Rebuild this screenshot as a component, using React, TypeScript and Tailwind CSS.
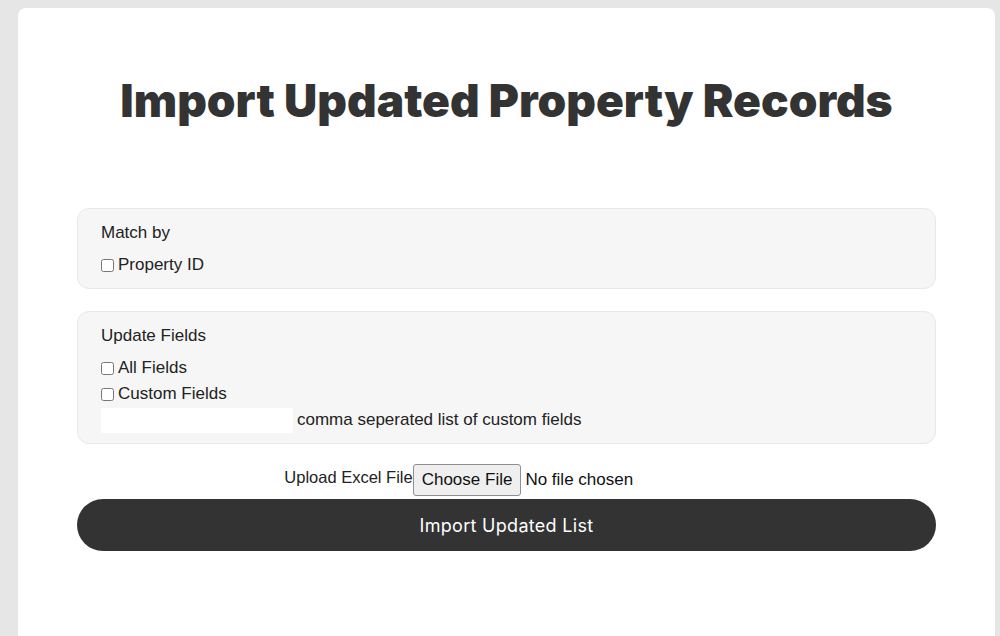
import React from 'react';

const Check: React.FC<{ label: string }> = ({ label }) => (
  <label className="flex h-[26px] items-center">
    <input type="checkbox" className="m-0 mr-[4px] h-[13px] w-[13px]" />
    <span>{label}</span>
  </label>
);

export default function App() {
  return (
    <div className="h-[636px] overflow-hidden bg-[#e6e6e6] pl-[18px] pr-[5px] pt-[8px] font-['Liberation_Sans',Arial,sans-serif] text-[17px] text-[#222]">
      <div className="h-[700px] rounded-lg bg-white px-[59px]">
        <h1 className="pt-[61px] text-center font-['Inter',sans-serif] text-[46px] font-black leading-[62px] text-[#333]">
          Import Updated Property Records
        </h1>

        <div className="mt-[77px] rounded-xl border border-[#e8e8e8] bg-[#f6f6f6] pb-[10px] pl-[23px] pt-[15px]">
          <div className="mb-[10px] leading-[18px]">Match by</div>
          <Check label="Property ID" />
        </div>

        <div className="mt-[22px] rounded-xl border border-[#e8e8e8] bg-[#f6f6f6] pb-[10px] pl-[23px] pt-[15px]">
          <div className="mb-[10px] leading-[18px]">Update Fields</div>
          <Check label="All Fields" />
          <Check label="Custom Fields" />
          <div className="flex h-[26px] items-center">
            <input type="text" className="h-[25px] w-[192px] bg-white px-1 outline-none" />
            <span className="ml-[4px]">comma seperated list of custom fields</span>
          </div>
        </div>

        <div className="mt-[20px] flex justify-center">
          <span className="mt-[4px] text-[16.5px] leading-[18px]">Upload Excel File</span>
          <div className="flex w-[316px] items-center">
            <button className="h-[32px] rounded-[3px] border border-[#8f8f8f] bg-[#efefef] px-[8px] text-[#111]">
              Choose File
            </button>
            <span className="ml-[4px] text-[#111]">No file chosen</span>
          </div>
        </div>

        <button className="mt-[3px] flex h-[52px] w-full items-center justify-center rounded-full bg-[#333] font-['Inter',sans-serif] text-[18px] tracking-[0.3px] text-white">
          Import Updated List
        </button>
      </div>
    </div>
  );
}
